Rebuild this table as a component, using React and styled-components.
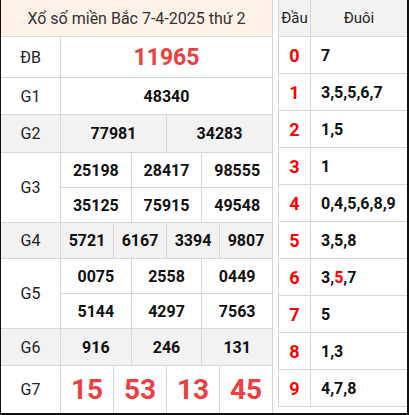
import React from "react";
import styled, { createGlobalStyle } from "styled-components";

const GlobalStyle = createGlobalStyle`
  * { box-sizing: border-box; }
  body {
    margin: 0;
    background: #fff;
    font-family: Roboto, "Liberation Sans", Arial, sans-serif;
  }
`;

const results = [
  { label: "ĐB", kind: "special", height: 41, rows: [["11965"]] },
  { label: "G1", height: 37, rows: [["48340"]] },
  { label: "G2", height: 38, shaded: true, rows: [["77981", "34283"]] },
  {
    label: "G3",
    height: 70,
    rows: [
      ["25198", "28417", "98555"],
      ["35125", "75915", "49548"],
    ],
  },
  { label: "G4", height: 36, shaded: true, rows: [["5721", "6167", "3394", "9807"]] },
  {
    label: "G5",
    height: 70,
    rows: [
      ["0075", "2558", "0449"],
      ["5144", "4297", "7563"],
    ],
  },
  { label: "G6", height: 37, shaded: true, rows: [["916", "246", "131"]] },
  { label: "G7", kind: "big", height: 47, rows: [["15", "53", "13", "45"]] },
];

const tails = [
  ["7"],
  ["3,5,5,6,7"],
  ["1,5"],
  ["1"],
  ["0,4,5,6,8,9"],
  ["3,5,8"],
  ["3,", <Hot key="h">5</Hot>, ",7"],
  ["5"],
  ["1,3"],
  ["4,7,8"],
];

function Hot({ children }) {
  return <HotDigit>{children}</HotDigit>;
}

export default function App() {
  return (
    <>
      <GlobalStyle />
      <Frame>
        <Results>
          <Title>Xổ số miền Bắc 7-4-2025 thứ 2</Title>
          {results.map((prize) => (
            <PrizeRow key={prize.label} $h={prize.height} $shaded={prize.shaded}>
              <Label>{prize.label}</Label>
              <Numbers>
                {prize.rows.map((line, i) => (
                  <NumberLine key={i}>
                    {line.map((n, j) => (
                      <Cell key={j} $kind={prize.kind}>
                        {n}
                      </Cell>
                    ))}
                  </NumberLine>
                ))}
              </Numbers>
            </PrizeRow>
          ))}
        </Results>
        <Stats>
          <StatRow $head>
            <Head>Đầu</Head>
            <TailHead>Đuôi</TailHead>
          </StatRow>
          {tails.map((t, i) => (
            <StatRow key={i}>
              <Digit>{i}</Digit>
              <Tail>{t}</Tail>
            </StatRow>
          ))}
        </Stats>
      </Frame>
    </>
  );
}

const Frame = styled.div`
  width: 409px;
  height: 415px;
  display: flex;
  gap: 5px;
  border-left: 1px solid #111;
  border-right: 2px solid #111;
  border-bottom: 2px solid #111;
  overflow: hidden;
`;

const Results = styled.div`
  width: 272px;
  flex-shrink: 0;
  display: flex;
  flex-direction: column;
  border-right: 1px solid #d8d8d8;
`;

const Title = styled.div`
  height: 37px;
  flex-shrink: 0;
  display: flex;
  align-items: center;
  justify-content: center;
  background: #fdf2e8;
  border-bottom: 1px solid #d8d8d8;
  font-size: 16px;
  color: #333;
`;

const PrizeRow = styled.div`
  height: ${(p) => p.$h}px;
  flex-shrink: 0;
  display: flex;
  background: ${(p) => (p.$shaded ? "#f2f2f2" : "#fff")};
  border-bottom: 1px solid #d8d8d8;
  &:last-child {
    border-bottom: none;
  }
`;

const Label = styled.div`
  width: 60px;
  flex-shrink: 0;
  display: flex;
  align-items: center;
  justify-content: center;
  border-right: 1px solid #d8d8d8;
  font-size: 16px;
  color: #222;
`;

const Numbers = styled.div`
  flex: 1;
  display: flex;
  flex-direction: column;
`;

const NumberLine = styled.div`
  flex: 1;
  display: flex;
  & + & {
    border-top: 1px solid #d8d8d8;
  }
`;

const cellSize = { special: 23, big: 28 };

const Cell = styled.div`
  flex: 1;
  display: flex;
  align-items: center;
  justify-content: center;
  font-weight: 700;
  font-size: ${(p) => cellSize[p.$kind] || 16}px;
  color: ${(p) => (p.$kind ? "#ec4040" : "#111")};
  & + & {
    border-left: 1px solid #d8d8d8;
  }
`;

const Stats = styled.div`
  flex: 1;
  display: flex;
  flex-direction: column;
  align-self: flex-start;
  border-left: 1px solid #d8d8d8;
`;

const StatRow = styled.div`
  height: 37px;
  display: flex;
  background: ${(p) => (p.$head ? "#f2f2f2" : "#fff")};
  border-bottom: 1px solid #d8d8d8;
`;

const Head = styled.div`
  width: 32px;
  flex-shrink: 0;
  display: flex;
  align-items: center;
  justify-content: center;
  border-right: 1px solid #d8d8d8;
  font-size: 15px;
  color: #222;
`;

const TailHead = styled.div`
  flex: 1;
  display: flex;
  align-items: center;
  justify-content: center;
  font-size: 15px;
  color: #222;
`;

const Digit = styled(Head)`
  font-size: 18px;
  font-weight: 700;
  color: #f00;
`;

const Tail = styled.div`
  flex: 1;
  display: flex;
  align-items: center;
  padding-left: 10px;
  font-size: 16px;
  font-weight: 700;
  color: #111;
`;

const HotDigit = styled.span`
  color: #f00;
`;
